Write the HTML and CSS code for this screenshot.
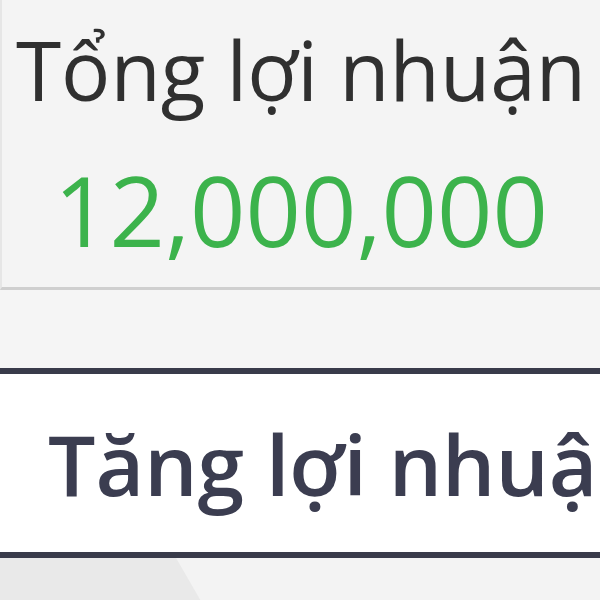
FILE: index.html
```html
<!DOCTYPE html>
<html lang="vi">
<head>
<meta charset="UTF-8">
<meta name="viewport" content="width=device-width, initial-scale=1.0">
<title>Lợi nhuận</title>
<link rel="stylesheet" href="styles.css">
</head>
<body>
<div class="page">
    <div class="summary">
        <div class="summary-label">Tổng lợi nhuận</div>
        <div class="summary-value">12,000,000</div>
    </div>
    <div class="spacer"></div>
    <div class="action">
        <span class="action-text">Tăng lợi nhuận</span>
    </div>
    <div class="footer"></div>
</div>
</body>
</html>
```

FILE: styles.css
```css
body {
    margin: 0;
    font-family: "Open Sans", "Noto Sans", sans-serif;
    background: #f4f4f4;
    overflow: hidden;
}
.page {
    width: 600px;
    height: 600px;
    overflow: hidden;
}
.summary {
    height: 290px;
    box-sizing: border-box;
    padding-top: 12px;
    background: #f4f4f4;
    border-left: 2px solid #e6e6e6;
    border-bottom: 3px solid #cfcfcf;
    text-align: center;
}
.summary-label {
    font-size: 82px;
    color: #303030;
    line-height: 114px;
    white-space: nowrap;
}
.summary-value {
    margin-top: 28px;
    font-size: 97px;
    color: #3cb34c;
    line-height: 110px;
}
.spacer {
    height: 78px;
    background: #f5f5f5;
}
.action {
    height: 178px;
    background: #fff;
    border-top: 6px solid #393b4a;
    border-bottom: 6px solid #393b4a;
    padding-left: 48px;
    display: flex;
    align-items: center;
    white-space: nowrap;
}
.action-text {
    font-size: 84px;
    font-weight: 600;
    color: #3b3d50;
}
.footer {
    height: 60px;
    background: linear-gradient(60deg, #e9e9e9 0, #e9e9e9 182px, #f3f3f3 183px);
}
```
